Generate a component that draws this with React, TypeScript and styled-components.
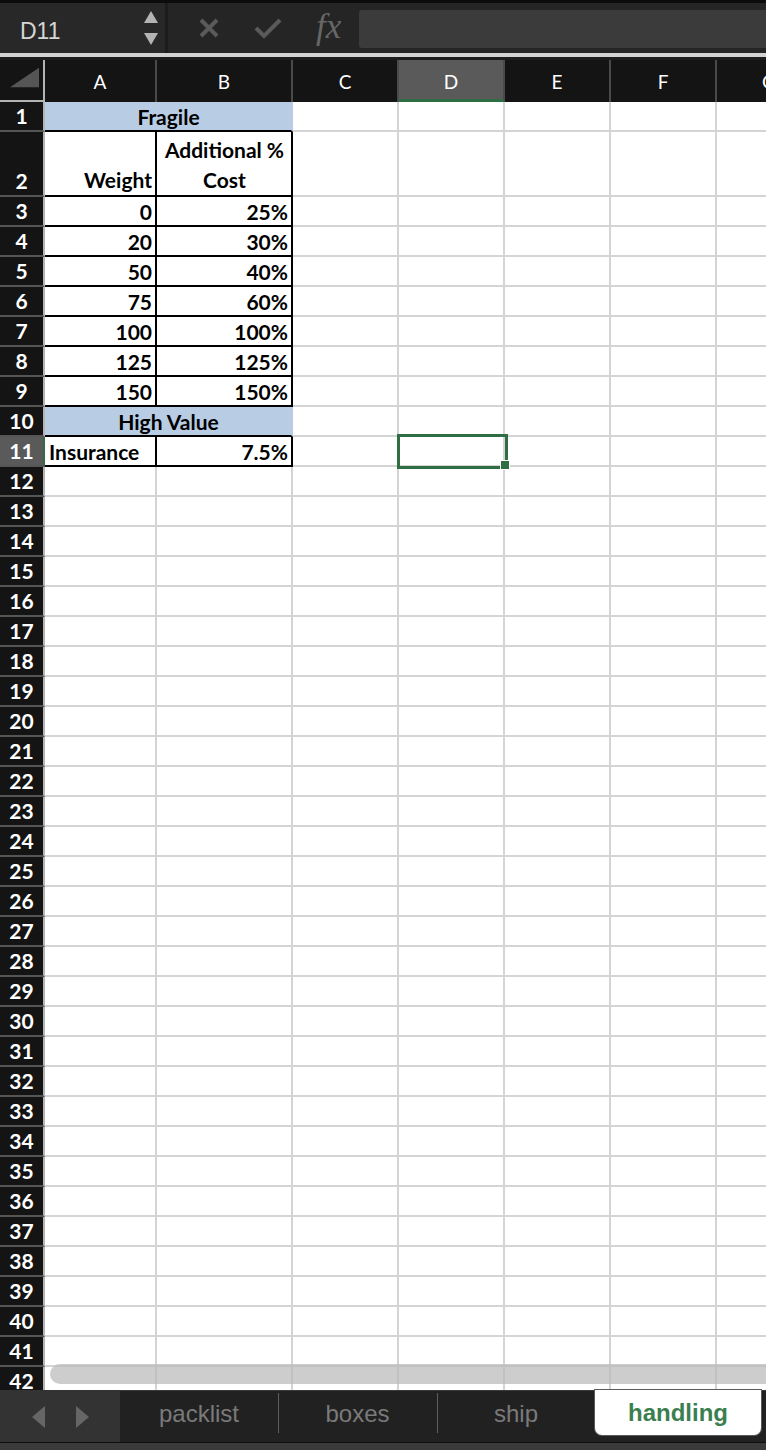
import React from "react";
import styled, { createGlobalStyle } from "styled-components";

const GlobalStyle = createGlobalStyle`
  html, body {
    margin: 0;
    padding: 0;
    background: #1e1e1e;
  }
`;

const BLUE = "#b8cce4";
const GRID = "#d4d4d4";
const INK = "#000";
const GREEN = "#2f6e42";
const CELL_FONT = `"Lato", "Open Sans", sans-serif`;
const UI_FONT = `"Liberation Sans", "Helvetica", Arial, sans-serif`;

const COLS = [112, 136, 106, 106, 106, 106, 106];
const LETTERS = ["A", "B", "C", "D", "E", "F", "G"];

type Align = "left" | "right" | "center";

interface CellSpec {
  text?: string;
  span?: number;
  align?: Align;
  valign?: "top" | "center" | "bottom";
  fill?: string;
  boxed?: boolean;
  lineBelow?: string;
  selected?: boolean;
}

interface RowSpec {
  height: number;
  cells: CellSpec[];
}

const fragile: [string, string][] = [
  ["0", "25%"],
  ["20", "30%"],
  ["50", "40%"],
  ["75", "60%"],
  ["100", "100%"],
  ["125", "125%"],
  ["150", "150%"],
];

const fill = (cells: CellSpec[]): CellSpec[] => {
  const used = cells.reduce((n, c) => n + (c.span || 1), 0);
  return [...cells, ...Array.from({ length: COLS.length - used }, () => ({}))];
};

const ROWS: RowSpec[] = [
  {
    height: 30,
    cells: fill([
      { text: "Fragile", span: 2, align: "center", fill: BLUE, lineBelow: INK },
    ]),
  },
  {
    height: 65,
    cells: fill([
      { text: "Weight", align: "right", valign: "bottom", boxed: true },
      { text: "Additional %\nCost", align: "center", valign: "bottom", boxed: true },
    ]),
  },
  ...fragile.map(([w, pct]) => ({
    height: 30,
    cells: fill([
      { text: w, align: "right" as Align, boxed: true },
      { text: pct, align: "right" as Align, boxed: true },
    ]),
  })),
  {
    height: 30,
    cells: fill([
      { text: "High Value", span: 2, align: "center", fill: BLUE, lineBelow: INK },
    ]),
  },
  {
    height: 30,
    cells: [
      { text: "Insurance", align: "left", boxed: true },
      { text: "7.5%", align: "right", boxed: true },
      {},
      { selected: true },
      {},
      {},
      {},
    ],
  },
  ...Array.from({ length: 31 }, () => ({ height: 30, cells: fill([]) })),
];

const ACTIVE_ROW = 11;
const ACTIVE_COL = 3;

/* ---------- frame ---------- */

const Frame = styled.div`
  width: 766px;
  height: 1450px;
  display: flex;
  flex-direction: column;
  overflow: hidden;
  background: #252525;
  border-top: 3px solid #0b0b0b;
  box-sizing: border-box;
`;

/* ---------- formula bar ---------- */

const FormulaBar = styled.div`
  height: 50px;
  display: flex;
  align-items: stretch;
  background: #252525;
  flex-shrink: 0;
`;

const NameBox = styled.div`
  width: 168px;
  display: flex;
  align-items: center;
  justify-content: space-between;
  padding: 6px 7px 0 20px;
  box-sizing: border-box;
  background: #282828;
  border-right: 3px solid #1c1c1c;
  font-family: ${UI_FONT};
  font-size: 23px;
  color: #d6d6d6;
`;

const Stepper = styled.div`
  display: flex;
  flex-direction: column;
  gap: 10px;
  margin-top: -6px;
`;

const BarIcons = styled.div`
  display: flex;
  align-items: center;
  gap: 34px;
  padding: 0 18px 0 30px;
`;

const Fx = styled.span`
  font-family: "Liberation Serif", "DejaVu Serif", serif;
  font-style: italic;
  font-size: 35px;
  color: #666;
  margin-top: -2px;
`;

const FormulaInput = styled.div`
  flex: 1;
  margin: 7px 0 5px;
  background: #3b3b3b;
  border-radius: 3px 0 0 3px;
`;

const Divider = styled.div`
  height: 4px;
  background: #d2d2d2;
  border-bottom: 3px solid #1c1c1c;
  flex-shrink: 0;
`;

/* ---------- sheet ---------- */

const Sheet = styled.div`
  position: relative;
  flex: 1;
  min-height: 0;
  overflow: hidden;
  background: #fff;
`;

const Line = styled.div<{ $h: number }>`
  display: flex;
  height: ${({ $h }) => $h}px;
`;

const Corner = styled.div`
  width: 45px;
  flex-shrink: 0;
  height: 42px;
  box-sizing: border-box;
  background: #141414;
  border-right: 2px solid #b4b4b4;
  border-bottom: 2px solid #b4b4b4;
  display: flex;
  align-items: flex-end;
  padding: 0 4px 12px 10px;
`;

const ColHead = styled.div<{ $w: number; $active?: boolean }>`
  width: ${({ $w }) => $w}px;
  flex-shrink: 0;
  height: 42px;
  box-sizing: border-box;
  display: flex;
  align-items: center;
  justify-content: center;
  background: ${({ $active }) => ($active ? "#5a5a5a" : "#141414")};
  border-right: 2px solid #4a4a4a;
  border-bottom: ${({ $active }) => ($active ? `3px solid ${GREEN}` : "none")};
  padding-top: ${({ $active }) => ($active ? "3px" : "0")};
  font-family: ${CELL_FONT};
  font-size: 19px;
  color: #fff;
`;

const RowHead = styled.div<{ $active?: boolean }>`
  width: 45px;
  flex-shrink: 0;
  box-sizing: border-box;
  display: flex;
  align-items: flex-end;
  justify-content: center;
  align-self: stretch;
  background: ${({ $active }) => ($active ? "#5a5a5a" : "#141414")};
  border-right: 2px solid ${({ $active }) => ($active ? GREEN : "#b4b4b4")};
  border-bottom: 2px solid #555;
  font-family: ${CELL_FONT};
  font-weight: 700;
  font-size: 21px;
  line-height: 28px;
  color: #fff;
`;

const Cell = styled.div<{
  $w: number;
  $align: Align;
  $valign: "top" | "center" | "bottom";
  $fill?: string;
  $boxed?: boolean;
  $below?: string;
}>`
  position: relative;
  width: ${({ $w }) => $w}px;
  flex-shrink: 0;
  box-sizing: border-box;
  display: flex;
  flex-direction: column;
  justify-content: ${({ $valign }) =>
    $valign === "top" ? "flex-start" : $valign === "bottom" ? "flex-end" : "center"};
  text-align: ${({ $align }) => $align};
  padding: ${({ $valign }) => ($valign === "center" ? "2px" : "0")} 3px 0 4px;
  background: ${({ $fill }) => $fill || "#fff"};
  border-right: 2px solid
    ${({ $boxed, $fill }) => ($boxed ? INK : $fill ? $fill : GRID)};
  border-bottom: 2px solid
    ${({ $boxed, $below }) => ($boxed ? INK : $below || GRID)};
  font-family: ${CELL_FONT};
  font-weight: 700;
  font-size: 21px;
  line-height: 30px;
  color: #000;
  white-space: pre-line;
`;

const Selection = styled.div`
  position: absolute;
  z-index: 2;
  left: -2px;
  top: -3px;
  right: -5px;
  bottom: -4px;
  border: 3px solid ${GREEN};
  pointer-events: none;

  &::after {
    content: "";
    position: absolute;
    right: -5px;
    bottom: -4px;
    width: 8px;
    height: 8px;
    background: ${GREEN};
    border: 1px solid #fff;
  }
`;

const ScrollThumb = styled.div`
  position: absolute;
  z-index: 3;
  left: 50px;
  right: -12px;
  bottom: 6px;
  height: 20px;
  border-radius: 10px;
  background: rgba(186, 186, 186, 0.72);
`;

/* ---------- sheet tabs ---------- */

const TabBar = styled.div`
  height: 52px;
  flex-shrink: 0;
  display: flex;
  background: #212121;
  border-bottom: 1px solid #0e0e0e;
`;

const Nav = styled.div`
  width: 120px;
  flex-shrink: 0;
  display: flex;
  align-items: center;
  justify-content: center;
  gap: 31px;
  background: #333;
  padding-top: 2px;
  box-sizing: border-box;
`;

const Tab = styled.div<{ $w: number; $active?: boolean; $sep?: boolean }>`
  width: ${({ $w }) => $w}px;
  flex-shrink: 0;
  box-sizing: border-box;
  display: flex;
  align-items: center;
  justify-content: center;
  font-family: ${UI_FONT};
  font-size: 24px;
  font-weight: ${({ $active }) => ($active ? 700 : 400)};
  color: ${({ $active }) => ($active ? "#3b7f50" : "#7a7a7a")};
  background: ${({ $active }) => ($active ? "#fff" : "transparent")};
  height: ${({ $active }) => ($active ? "45px" : "100%")};
  border-radius: ${({ $active }) => ($active ? "0 0 7px 7px" : "0")};
  box-shadow: ${({ $active }) => ($active ? "0 0 0 1px #5a5a5a" : "none")};
  border-top: ${({ $active }) => ($active ? "none" : "1px solid #3a3a3a")};
  position: relative;
  padding-bottom: ${({ $active }) => ($active ? "0" : "5px")};

  &::before {
    content: "";
    display: ${({ $sep }) => ($sep ? "block" : "none")};
    position: absolute;
    left: 0;
    top: 2px;
    height: 40px;
    width: 1px;
    background: #5e5e5e;
  }
`;

const TabFill = styled.div`
  flex: 1;
  border-top: 1px solid #3a3a3a;
`;

const StatusStrip = styled.div`
  height: 7px;
  flex-shrink: 0;
  background: #3a3a3a;
`;

const Tri = ({ dir, color }: { dir: "up" | "down" | "left" | "right"; color: string }) => {
  const pts = {
    up: "7,0 14,12 0,12",
    down: "0,0 14,0 7,12",
    left: "13,0 13,22 0,11",
    right: "0,0 13,11 0,22",
  }[dir];
  const vertical = dir === "up" || dir === "down";
  return (
    <svg
      width={vertical ? 14 : 13}
      height={vertical ? 12 : 22}
      viewBox={vertical ? "0 0 14 12" : "0 0 13 22"}
    >
      <polygon points={pts} fill={color} />
    </svg>
  );
};

export default function App() {
  const tabs = [
    { name: "packlist", w: 158 },
    { name: "boxes", w: 159 },
    { name: "ship", w: 158 },
    { name: "handling", w: 166, active: true },
  ];

  return (
    <>
      <GlobalStyle />
      <Frame>
        <FormulaBar>
          <NameBox>
            D11
            <Stepper>
              <Tri dir="up" color="#b3b3b3" />
              <Tri dir="down" color="#b3b3b3" />
            </Stepper>
          </NameBox>
          <BarIcons>
            <svg width="22" height="22" viewBox="0 0 22 22">
              <path d="M3 3 L19 19 M19 3 L3 19" stroke="#5a5a5a" strokeWidth="4" />
            </svg>
            <svg width="28" height="22" viewBox="0 0 28 22">
              <path d="M2 11 L10 19 L26 3" stroke="#5a5a5a" strokeWidth="4" fill="none" />
            </svg>
            <Fx>fx</Fx>
          </BarIcons>
          <FormulaInput />
        </FormulaBar>
        <Divider />
        <Sheet>
          <Line $h={42}>
            <Corner>
              <svg width="31" height="21" viewBox="0 0 31 21">
                <polygon points="31,0 31,21 0,21" fill="#555" />
              </svg>
            </Corner>
            {COLS.map((w, i) => (
              <ColHead key={LETTERS[i]} $w={w} $active={i === ACTIVE_COL}>
                {LETTERS[i]}
              </ColHead>
            ))}
          </Line>
          {ROWS.map((row, r) => {
            let col = 0;
            return (
              <Line key={r} $h={row.height}>
                <RowHead $active={r + 1 === ACTIVE_ROW}>{r + 1}</RowHead>
                {row.cells.map((c, i) => {
                  const span = c.span || 1;
                  const w = COLS.slice(col, col + span).reduce((a, b) => a + b, 0);
                  col += span;
                  return (
                    <Cell
                      key={i}
                      $w={w}
                      $align={c.align || "left"}
                      $valign={c.valign || "center"}
                      $fill={c.fill}
                      $boxed={c.boxed}
                      $below={c.lineBelow}
                    >
                      {c.text}
                      {c.selected && <Selection />}
                    </Cell>
                  );
                })}
              </Line>
            );
          })}
          <ScrollThumb />
        </Sheet>
        <TabBar>
          <Nav>
            <Tri dir="left" color="#666" />
            <Tri dir="right" color="#666" />
          </Nav>
          {tabs.map((t, i) => (
            <Tab key={t.name} $w={t.w} $active={t.active} $sep={!t.active && i > 0}>
              {t.name}
            </Tab>
          ))}
          <TabFill />
        </TabBar>
        <StatusStrip />
      </Frame>
    </>
  );
}
